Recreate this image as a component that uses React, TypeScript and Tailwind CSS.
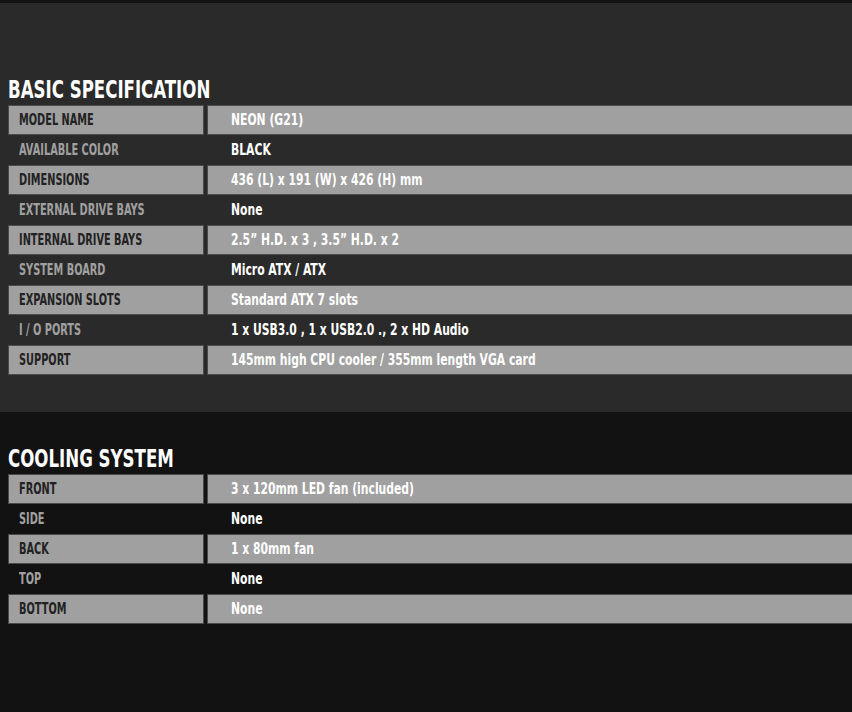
const basic: [string, string][] = [
  ["MODEL NAME", "NEON (G21)"],
  ["AVAILABLE COLOR", "BLACK"],
  ["DIMENSIONS", "436 (L) x 191 (W) x 426 (H) mm"],
  ["EXTERNAL DRIVE BAYS", "None"],
  ["INTERNAL DRIVE BAYS", "2.5\u201D H.D. x 3 , 3.5\u201D H.D. x 2"],
  ["SYSTEM BOARD", "Micro ATX / ATX"],
  ["EXPANSION SLOTS", "Standard ATX 7 slots"],
  ["I / O PORTS", "1 x USB3.0 , 1 x USB2.0 ., 2 x HD Audio"],
  ["SUPPORT", "145mm high CPU cooler / 355mm length VGA card"],
];

const cooling: [string, string][] = [
  ["FRONT", "3 x 120mm LED fan (included)"],
  ["SIDE", "None"],
  ["BACK", "1 x 80mm fan"],
  ["TOP", "None"],
  ["BOTTOM", "None"],
];

function SpecTable({ rows }: { rows: [string, string][] }) {
  return (
    <div className="flex flex-col">
      {rows.map(([label, value], i) => {
        const shaded = i % 2 === 0;
        return (
          <div key={label} className="flex h-[30px] gap-[3px]">
            <div
              className={
                shaded
                  ? "w-[196px] flex items-center pl-[10px] bg-[#a0a0a0] border border-[#4a4a4a] text-[#222]"
                  : "w-[196px] flex items-center pl-[11px] text-[#a0a0a0]"
              }
            >
              {/* narrow display face isn't installed, so squeeze the condensed one */}
              <span className="inline-block origin-left scale-x-[0.68] whitespace-nowrap">{label}</span>
            </div>
            <div
              className={
                shaded
                  ? "flex-1 flex items-center pl-[23px] bg-[#a0a0a0] border border-r-0 border-[#4a4a4a] text-white"
                  : "flex-1 flex items-center pl-[24px] text-white"
              }
            >
              <span className="inline-block origin-left scale-x-[0.75] whitespace-nowrap">{value}</span>
            </div>
          </div>
        );
      })}
    </div>
  );
}

export default function App() {
  return (
    <div
      className="w-[852px] h-[712px] bg-[#121212] overflow-hidden text-[16px] font-bold leading-none"
      style={{ fontFamily: "'DejaVu Sans Condensed', 'DejaVu Sans', sans-serif" }}
    >
      <div className="mt-[3px] h-[409px] bg-[#2a2a2a] pl-[8px] pt-[73px]">
        <h2 className="text-white text-[24px] h-[29px] flex items-end pb-[3px]">
          <span className="inline-block origin-left scale-x-[0.77] whitespace-nowrap">BASIC SPECIFICATION</span>
        </h2>
        <SpecTable rows={basic} />
      </div>
      <div className="pl-[8px] pt-[33px]">
        <h2 className="text-white text-[24px] h-[29px] flex items-end pb-[3px]">
          <span className="inline-block origin-left scale-x-[0.77] whitespace-nowrap">COOLING SYSTEM</span>
        </h2>
        <SpecTable rows={cooling} />
      </div>
    </div>
  );
}
